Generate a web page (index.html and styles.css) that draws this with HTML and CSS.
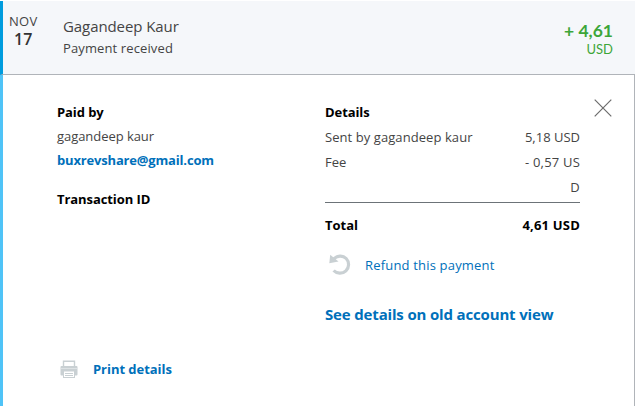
FILE: index.html
```
<!DOCTYPE html>
<html lang="en">
<head>
<meta charset="utf-8">
<title>Payment details</title>
<link rel="stylesheet" href="styles.css">
</head>
<body>
<header class="summary">
  <div class="date"><div class="month">NOV</div><div class="day">17</div></div>
  <div class="payee"><div class="name">Gagandeep Kaur</div><div class="status">Payment received</div></div>
  <div class="amount"><div class="value">+ 4,61</div><div class="currency">USD</div></div>
</header>
<main class="panel">
  <section class="payer">
    <h2 class="paid">Paid by</h2>
    <p><span class="payer-name">gagandeep kaur</span></p>
    <a class="email">buxrevshare@gmail.com</a>
    <h2 class="transaction">Transaction ID</h2>
    <div class="print">
      <svg class="printer" width="18" height="18" viewBox="0 0 18 18">
        <path d="M3.5 7V1.2h11V7" fill="#fff" stroke="#c9d0d3" stroke-width="1.4"/>
        <rect x=".5" y="6" width="17" height="9.5" rx="1" fill="#c9d0d3"/>
        <path d="M1 8.5h16" stroke="#dde2e4"/>
        <rect x="3.5" y="11" width="11" height="6.5" fill="#fff" stroke="#c9d0d3"/>
        <path d="M5 13.5h8M5 15.5h8" stroke="#c9d0d3"/>
      </svg>
      <a class="print-link">Print details</a>
    </div>
  </section>
  <section class="details">
    <h2 class="heading">Details</h2>
    <div class="row first"><span class="sent">Sent by gagandeep kaur</span><span class="sum">5,18 USD</span></div>
    <div class="row"><span>Fee</span><span class="sum fee">- 0,57 US<br>D</span></div>
    <div class="row total"><span class="total-label">Total</span><span class="total-sum">4,61 USD</span></div>
    <div class="refund">
      <svg width="22" height="22" viewBox="0 0 22 22">
        <path d="M4.2 5.6C8 1 14 1.2 17.2 4.5A8.5 8.5 0 0 1 4.6 16.5" fill="none" stroke="#c9d0d3" stroke-width="3.2"/>
        <path d="M1.2.8L.3 9.2l9.2-1.8z" fill="#c9d0d3"/>
      </svg>
      <a class="refund-link">Refund this payment</a>
    </div>
    <a class="old-view">See details on old account view</a>
  </section>
  <svg class="close" width="18" height="18" viewBox="0 0 18 18"><path d="M.7.7l16.6 16.6M17.3.7L.7 17.3" stroke="#6c6c6c" stroke-width="1.2"/></svg>
</main>
</body>
</html>
```
FILE: styles.css
```
* { box-sizing: border-box; }
body { margin: 0; padding-top: 1px; height: 406px; overflow: hidden; background: #fff; color: #444; font: 13px/24px "Open Sans", sans-serif; white-space: nowrap; }
h2, p { margin: 0; font-size: 13px; line-height: 24px; }
h2 { color: #000; letter-spacing: -.08px; }
a { color: #0070ba; display: block; }
.summary { display: flex; height: 74px; background: #f5f7fa; border-left: 3px solid #009cde; border-bottom: 1px solid #b0b4b9; }
.date { width: 60px; padding: 11px 0 0 6px; }
.month { line-height: 18px; letter-spacing: .3px; }
.day { line-height: 18px; font-size: 16px; font-weight: 600; padding-left: 5px; color: #333; }
.payee { flex: 1; padding-top: 14px; }
.name { font-size: 15px; line-height: 23px; letter-spacing: -.08px; }
.status { line-height: 21px; letter-spacing: .12px; }
.amount { padding: 19px 22px 0 0; text-align: right; color: #3da639; font-family: Lato, sans-serif; }
.value { font-size: 17.5px; line-height: 21px; font-weight: 700; }
.currency { line-height: 16px; }
.panel { display: flex; height: 331px; border-left: 3px solid #4fc3f7; border-right: 1px solid #b0b4b9; padding: 25px 0 0 54px; }
.payer { width: 268px; }
.payer-name { letter-spacing: -.05px; }
.email { font-weight: 700; letter-spacing: -.17px; }
.transaction { margin-top: 15px; }
.print { display: flex; align-items: center; margin-top: 146px; }
.printer { margin-left: 3px; }
.print-link { font-weight: 700; margin-left: 15px; letter-spacing: -.04px; }
.details { width: 255px; }
.row { display: flex; justify-content: space-between; line-height: 25px; }
.first { margin-top: 1px; }
.sent { letter-spacing: .07px; }
.sum { text-align: right; }
.fee { letter-spacing: .2px; }
.total { margin-top: 2px; padding-top: 10px; border-top: 1px solid #6c7378; line-height: 24px; font-weight: 700; color: #000; }
.total-sum { letter-spacing: .2px; }
.refund { display: flex; align-items: center; margin-top: 16px; padding-left: 4px; }
.refund-link { margin-left: 14px; letter-spacing: .18px; }
.old-view { font-size: 15px; font-weight: 700; margin-top: 25px; letter-spacing: -.16px; }
.close { margin: -1px 0 0 14px; }
```
